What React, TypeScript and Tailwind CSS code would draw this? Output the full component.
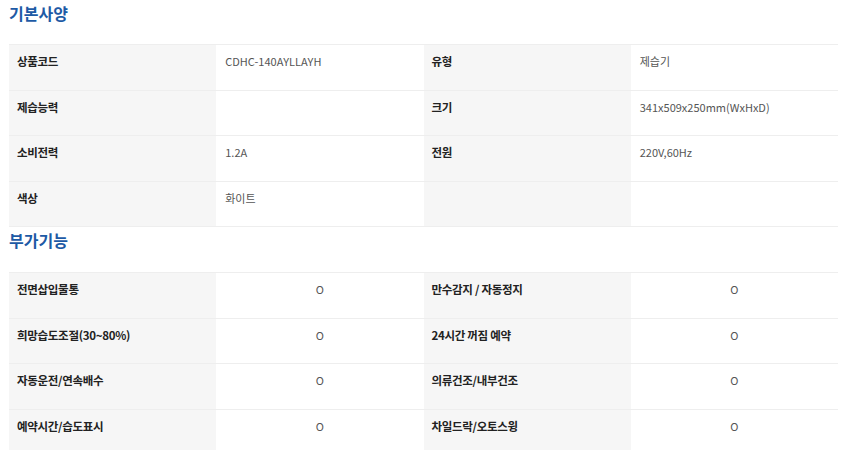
import React from "react";

const font = { fontFamily: '"Noto Sans CJK KR", "Noto Sans", sans-serif' };

type Row = [string, string, string, string];

const basic: Row[] = [
  ["상품코드", "CDHC-140AYLLAYH", "유형", "제습기"],
  ["제습능력", "", "크기", "341x509x250mm(WxHxD)"],
  ["소비전력", "1.2A", "전원", "220V,60Hz"],
  ["색상", "화이트", "", ""],
];

const extra: Row[] = [
  ["전면삽입물통", "O", "만수감지 / 자동정지", "O"],
  ["희망습도조절(30~80%)", "O", "24시간 꺼짐 예약", "O"],
  ["자동운전/연속배수", "O", "의류건조/내부건조", "O"],
  ["예약시간/습도표시", "O", "차일드락/오토스윙", "O"],
];

function Table({ rows, center }: { rows: Row[]; center?: boolean }) {
  const label = "bg-[#f6f6f6] pl-[8px] pt-[7px] text-[11.5px] tracking-[-0.3px] leading-[18px] font-bold text-[#222]";
  const value = center
    ? "bg-white pt-[7px] text-center text-[11px] leading-[18px] text-[#555]"
    : "bg-white pl-[9px] pt-[7px] text-[11px] leading-[18px] text-[#555]";
  return (
    <div className="w-[829px] border-t border-[#eeeeee]">
      {rows.map((r, i) => (
        <div key={i} className="grid grid-cols-4 h-[45.5px] border-b border-[#eeeeee]">
          <div className={label}>{r[0]}</div>
          <div className={value}>{r[1]}</div>
          <div className={label}>{r[2]}</div>
          <div className={value}>{r[3]}</div>
        </div>
      ))}
    </div>
  );
}

export default function App() {
  return (
    <div className="w-[860px] h-[450px] overflow-hidden bg-white pl-[9px]" style={font}>
      <div className="h-[44px] pt-[1px] text-[16px] leading-[24px] font-bold text-[#1d5aa5]">기본사양</div>
      <Table rows={basic} />
      <div className="h-[45px] pt-[1px] text-[16px] leading-[24px] font-bold text-[#1d5aa5]">부가기능</div>
      <Table rows={extra} center />
    </div>
  );
}
